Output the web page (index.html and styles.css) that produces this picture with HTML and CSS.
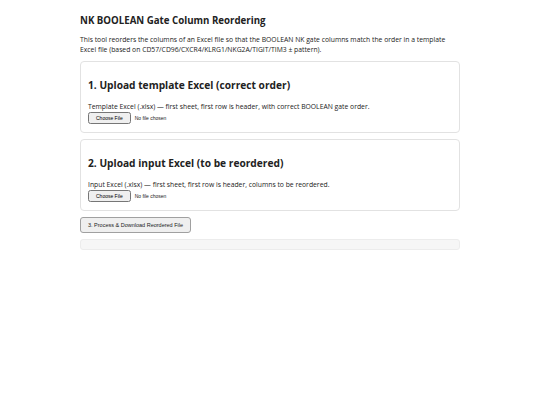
FILE: index.html
```html
<!DOCTYPE html>
<html lang="en">
<head>
  <meta charset="UTF-8">
  <meta name="viewport" content="width=device-width, initial-scale=1.0">
  <title>NK BOOLEAN Gate Column Reordering</title>
  <link rel="stylesheet" href="styles.css">
</head>
<body>
  <div class="page">
    <h1>NK BOOLEAN Gate Column Reordering</h1>
    <p class="intro">This tool reorders the columns of an Excel file so that the BOOLEAN NK gate columns match the order in a template Excel file (based on CD57/CD96/CXCR4/KLRG1/NKG2A/TIGIT/TIM3 ± pattern).</p>

    <div class="card">
      <h2>1. Upload template Excel (correct order)</h2>
      <p>Template Excel (.xlsx) — first sheet, first row is header, with correct BOOLEAN gate order.</p>
      <input type="file" id="templateFile" accept=".xlsx">
    </div>

    <div class="card">
      <h2>2. Upload input Excel (to be reordered)</h2>
      <p>Input Excel (.xlsx) — first sheet, first row is header, columns to be reordered.</p>
      <input type="file" id="inputFile" accept=".xlsx">
    </div>

    <button class="process-btn" id="processBtn">3. Process &amp; Download Reordered File</button>
    <div class="status" id="status"></div>
  </div>
</body>
</html>
```

FILE: styles.css
```css
body {
  font-family: "Open Sans", "Noto Sans", sans-serif;
  margin: 0;
  padding: 0;
  background: #fff;
  color: #222;
}
.page {
  max-width: 380px;
  margin: 0 auto;
  padding: 14px 0;
  font-size: 7px;
}
h1 {
  font-size: 9.7px;
  font-weight: 700;
  margin: 0 0 7px;
  line-height: 14px;
}
.intro {
  font-size: 6.8px;
  line-height: 9.5px;
  margin: 0 0 7px;
}
.card {
  border: 1px solid #e2e2e2;
  border-radius: 4px;
  padding: 8px 7px 7.5px;
  margin-bottom: 6.5px;
}
.card h2 {
  font-size: 10.2px;
  font-weight: 700;
  margin: 7px 0 9px;
  line-height: 16px;
}
.card p {
  font-size: 6.8px;
  line-height: 9px;
  margin: 0 0 1px;
}
.card input[type="file"] {
  display: block;
  font-size: 5px;
  font-family: "Liberation Sans", Arial, sans-serif;
}
.process-btn {
  display: block;
  font-family: "Liberation Sans", Arial, sans-serif;
  font-size: 5.5px;
  padding: 4px 7px;
  border: 1px solid #a0a0a0;
  border-radius: 3px;
  background: #efefef;
  color: #222;
  cursor: pointer;
}
.status {
  margin-top: 6px;
  height: 9px;
  background: #f6f6f6;
  border: 1px solid #ececec;
  border-radius: 3px;
}
```
